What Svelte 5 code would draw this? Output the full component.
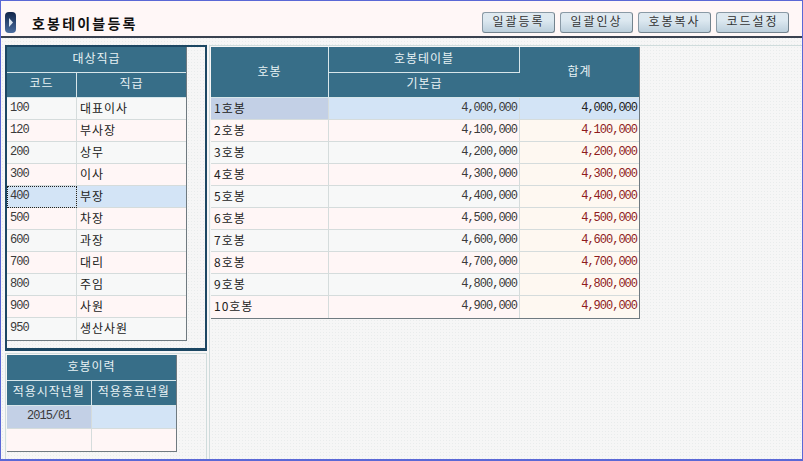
<script lang="ts">
  const buttons = ["일괄등록", "일괄인상", "호봉복사", "코드설정"];
  const grades = [
    ["100", "대표이사"],
    ["120", "부사장"],
    ["200", "상무"],
    ["300", "이사"],
    ["400", "부장"],
    ["500", "차장"],
    ["600", "과장"],
    ["700", "대리"],
    ["800", "주임"],
    ["900", "사원"],
    ["950", "생산사원"],
  ];
  const steps = Array.from({ length: 10 }, (_, i) => ({
    name: `${i + 1}호봉`,
    pay: (4000 + i * 100) + ",000",
  }));
  const money = (v: string) => v.slice(0, 1) + "," + v.slice(1);
</script>

<div class="screen">
  <header class="toolbar">
    <div class="title">
      <svg class="marker" width="11" height="21" viewBox="0 0 11 21" aria-hidden="true">
        <defs>
          <linearGradient id="markerFill" x1="0" y1="0" x2="0" y2="1">
            <stop offset="0" stop-color="#12254a" />
            <stop offset="1" stop-color="#4a6da0" />
          </linearGradient>
        </defs>
        <rect width="11" height="21" rx="4" fill="url(#markerFill)" />
        <path d="M4 6 L8 10.5 L4 15 Z" fill="#dfe8f2" />
      </svg>
      <h1>호봉테이블등록</h1>
    </div>
    <div class="actions">
      {#each buttons as label}
        <button type="button">{label}</button>
      {/each}
    </div>
  </header>

  <main class="body">
    <aside class="side">
      <section class="panel selected">
        <table class="grades">
          <colgroup><col class="c-code" /><col /></colgroup>
          <thead>
            <tr><th colspan="2">대상직급</th></tr>
            <tr><th>코드</th><th>직급</th></tr>
          </thead>
          <tbody>
            {#each grades as [code, name], i}
              <tr class:odd={i % 2 === 0} class:current={i === 4}>
                <td class="num" class:focus={i === 4}>{code}</td>
                <td>{name}</td>
              </tr>
            {/each}
          </tbody>
        </table>
      </section>
      <section class="panel history">
        <table class="hist">
          <thead>
            <tr><th colspan="2">호봉이력</th></tr>
            <tr><th>적용시작년월</th><th>적용종료년월</th></tr>
          </thead>
          <tbody>
            <tr class="current tall"><td class="picked center num">2015/01</td><td></td></tr>
            <tr><td></td><td></td></tr>
          </tbody>
        </table>
      </section>
    </aside>

    <section class="content">
      <table class="steps">
        <colgroup><col class="c-step" /><col class="c-base" /><col /></colgroup>
        <thead>
          <tr><th rowspan="2">호봉</th><th>호봉테이블</th><th rowspan="2">합계</th></tr>
          <tr><th>기본급</th></tr>
        </thead>
        <tbody>
          {#each steps as s, i}
            <tr class:current={i === 0} class:odd={i % 2 === 0}>
              <td class:picked={i === 0}>{s.name}</td>
              <td class="num right">{money(s.pay)}</td>
              <td class="num right total">{money(s.pay)}</td>
            </tr>
          {/each}
        </tbody>
      </table>
    </section>
  </main>
</div>

<style>
  :global(body) {
    margin: 0;
  }

  .screen {
    box-sizing: border-box;
    width: 803px;
    height: 461px;
    border: 1px solid #5a68d6;
    border-bottom-width: 2px;
    overflow: hidden;
    font-family: "Noto Sans CJK KR", "Liberation Sans", sans-serif;
    font-size: 12px;
    color: #222;
    background-color: #f6f6f6;
    background-image: radial-gradient(#e9ecec 0.6px, transparent 0.7px);
    background-size: 3px 3px;
  }

  .toolbar {
    box-sizing: border-box;
    height: 37px;
    display: flex;
    justify-content: space-between;
    align-items: flex-start;
    padding: 11px 13px 0 4px;
    background: #fff7f7;
    border-bottom: 2px solid #3a4250;
  }

  .title {
    display: flex;
    align-items: center;
    gap: 16px;
  }

  .marker {
    display: block;
  }

  h1 {
    margin: 0;
    font-size: 14px;
    font-weight: 700;
    letter-spacing: 2.2px;
    line-height: 20px;
    color: #111;
  }

  .actions {
    display: flex;
    gap: 5px;
  }

  button {
    box-sizing: border-box;
    width: 73px;
    height: 21px;
    padding: 0 0 3px;
    font: inherit;
    letter-spacing: 2px;
    line-height: 14px;
    color: #333;
    border: 1px solid #8a9aa6;
    border-right-color: #73838e;
    border-bottom-color: #73838e;
    border-radius: 3px;
    background: linear-gradient(#dfe9f0, #dce8f0 40%, #bccfdc);
  }

  .body {
    display: flex;
    padding-top: 7px;
  }

  .side {
    width: 202px;
    margin-left: 4px;
    display: flex;
    flex-direction: column;
    gap: 2px;
  }

  .panel {
    box-sizing: border-box;
    width: 202px;
  }

  .selected {
    height: 306px;
    border: 2px solid #1c4763;
    border-bottom-width: 3px;
  }

  .history {
    height: 110px;
    padding: 1px 0 0 1px;
    border: 1px solid #cfdcdc;
  }

  .content {
    margin-left: 2px;
    padding: 1px 0 0 1px;
    flex: 1;
    border-left: 1px solid #cfdcdc;
    border-top: 1px solid #cfdcdc;
    height: 415px;
    box-sizing: border-box;
  }

  table {
    border-collapse: separate;
    border-spacing: 0;
    table-layout: fixed;
    background: #fff6f6;
    border-right: 1px solid #6f7a80;
    border-bottom: 1px solid #6f7a80;
  }

  .grades {
    width: 180px;
  }
  .c-code {
    width: 70px;
  }
  .hist {
    width: 170px;
  }
  .steps {
    width: 429px;
  }
  .c-step {
    width: 118px;
  }
  .c-base {
    width: 191px;
  }

  th {
    box-sizing: border-box;
    padding: 0 0 3px;
    height: 25.5px;
    font-weight: 400;
    letter-spacing: 1px;
    line-height: 16px;
    color: #e8f2f4;
    background: #376e88;
    border-right: 1px solid #d7e6ea;
    border-bottom: 1px solid #d7e6ea;
  }

  td {
    box-sizing: border-box;
    height: 22px;
    padding: 0 3px 2px;
    letter-spacing: 1px;
    line-height: 16px;
    white-space: nowrap;
    overflow: hidden;
    background: #fff6f6;
    border-right: 1px solid #d5dcdc;
    border-bottom: 1px solid #d5dcdc;
  }

  tr td:last-child,
  tr th:last-child {
    border-right: 0;
  }

  tbody tr:last-child td {
    border-bottom: 0;
  }

  .tall td {
    height: 23px;
  }

  .odd td {
    background: #f7f8f8;
  }

  .current td {
    background: #d3e4f6;
  }

  .current td.picked {
    background: #c3d0e6;
  }

  .current td.focus {
    outline: 1px dotted #222;
    outline-offset: -1px;
  }

  .num {
    font-family: "Liberation Mono", monospace;
    font-size: 12px;
    letter-spacing: -1px;
    color: #3a3a3a;
  }

  .right {
    text-align: right;
    padding-right: 2px;
  }

  .center {
    text-align: center;
  }

  .total,
  .odd .total {
    color: #8e1c1c;
    background: #fef8f1;
  }

  .current .total {
    color: #222;
    background: #d3e4f6;
  }
</style>
